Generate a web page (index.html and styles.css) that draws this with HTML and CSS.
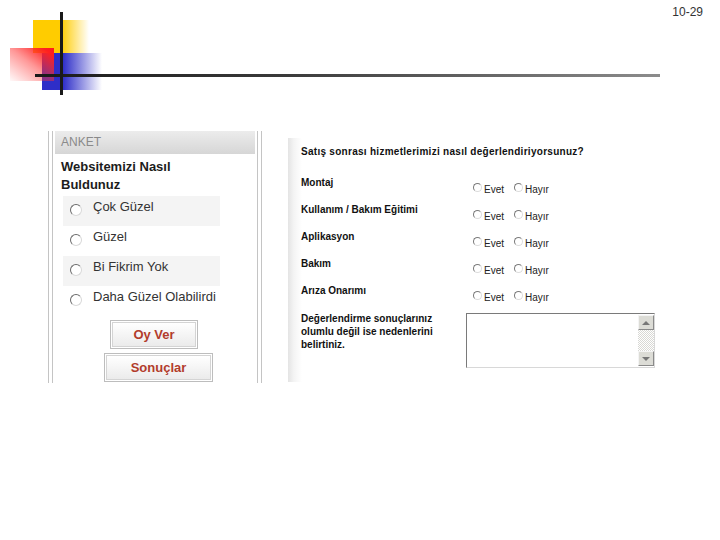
FILE: index.html
```html
<!DOCTYPE html>
<html lang="tr">
<head>
<meta charset="utf-8">
<title>Anket</title>
<link rel="stylesheet" href="styles.css">
</head>
<body>
<header class="top">
  <svg class="deco" width="720" height="100" viewBox="0 0 720 100" aria-hidden="true">
    <defs>
      <linearGradient id="gy" x1="0" y1="0" x2="1" y2="0">
        <stop offset="0" stop-color="#ffcc00"/>
        <stop offset="0.5" stop-color="#ffcc00"/>
        <stop offset="1" stop-color="#ffcc00" stop-opacity="0"/>
      </linearGradient>
      <linearGradient id="gb" x1="0" y1="0" x2="1" y2="0">
        <stop offset="0" stop-color="#2e2ec8"/>
        <stop offset="0.35" stop-color="#2e2ec8"/>
        <stop offset="1" stop-color="#2e2ec8" stop-opacity="0"/>
      </linearGradient>
      <linearGradient id="gr" x1="1" y1="0" x2="0" y2="1">
        <stop offset="0" stop-color="#ff1a1a"/>
        <stop offset="0.12" stop-color="#ff2020"/>
        <stop offset="0.5" stop-color="#ff3030" stop-opacity="0.5"/>
        <stop offset="1" stop-color="#ff4040" stop-opacity="0.03"/>
      </linearGradient>
      <linearGradient id="gl" x1="0" y1="0" x2="1" y2="0">
        <stop offset="0" stop-color="#1a1a1a"/>
        <stop offset="0.4" stop-color="#3a3a3a"/>
        <stop offset="1" stop-color="#8c8c8c"/>
      </linearGradient>
    </defs>
    <rect x="33" y="20" width="56" height="33" fill="url(#gy)"/>
    <rect x="42" y="53" width="60" height="37" fill="url(#gb)"/>
    <rect x="10" y="48" width="44" height="33" fill="url(#gr)"/>
    <rect x="35" y="74" width="625" height="3" fill="url(#gl)"/>
    <rect x="60" y="12" width="3" height="83" fill="#1a1a1a"/>
  </svg>
  <div class="pagenum">10-29</div>
</header>

<main class="content">
  <section class="poll">
    <div class="poll-inner">
      <div class="poll-head">ANKET</div>
      <div class="poll-title">Websitemizi Nasıl<br>Buldunuz</div>
      <div class="poll-options">
        <div class="opt shaded"><span class="radio big"></span><span class="opt-text">Çok Güzel</span></div>
        <div class="opt"><span class="radio big"></span><span class="opt-text">Güzel</span></div>
        <div class="opt shaded"><span class="radio big"></span><span class="opt-text">Bi Fikrim Yok</span></div>
        <div class="opt"><span class="radio big"></span><span class="opt-text">Daha Güzel Olabilirdi</span></div>
      </div>
      <div class="poll-buttons">
        <div class="btn btn-vote"><span class="btn-face">Oy Ver</span></div>
        <div class="btn btn-results"><span class="btn-face">Sonuçlar</span></div>
      </div>
    </div>
  </section>

  <section class="survey">
    <div class="question">Satış sonrası hizmetlerimizi nasıl değerlendiriyorsunuz?</div>
    <div class="srow">
      <div class="slabel">Montaj</div>
      <div class="choices"><span class="radio"></span><span class="ctext">Evet</span><span class="radio second"></span><span class="ctext">Hayır</span></div>
    </div>
    <div class="srow">
      <div class="slabel">Kullanım / Bakım Eğitimi</div>
      <div class="choices"><span class="radio"></span><span class="ctext">Evet</span><span class="radio second"></span><span class="ctext">Hayır</span></div>
    </div>
    <div class="srow">
      <div class="slabel">Aplikasyon</div>
      <div class="choices"><span class="radio"></span><span class="ctext">Evet</span><span class="radio second"></span><span class="ctext">Hayır</span></div>
    </div>
    <div class="srow">
      <div class="slabel">Bakım</div>
      <div class="choices"><span class="radio"></span><span class="ctext">Evet</span><span class="radio second"></span><span class="ctext">Hayır</span></div>
    </div>
    <div class="srow">
      <div class="slabel">Arıza Onarımı</div>
      <div class="choices"><span class="radio"></span><span class="ctext">Evet</span><span class="radio second"></span><span class="ctext">Hayır</span></div>
    </div>
    <div class="trow">
      <div class="tlabel">Değerlendirme sonuçlarınız<br>olumlu değil ise nedenlerini<br>belirtiniz.</div>
      <div class="tarea">
        <div class="tarea-body"></div>
        <div class="sbar">
          <div class="sbtn"><span class="arrow up"></span></div>
          <div class="strack"></div>
          <div class="sbtn"><span class="arrow down"></span></div>
        </div>
      </div>
    </div>
  </section>
</main>
</body>
</html>
```

FILE: styles.css
```css
html, body {
  margin: 0;
  padding: 0;
  background: #ffffff;
}
body {
  width: 720px;
  height: 540px;
  overflow: hidden;
  font-family: "Liberation Sans", Arial, sans-serif;
  color: #1a1a1a;
}

/* header decoration */
.top {
  position: relative;
  height: 100px;
}
.deco {
  display: block;
}
.pagenum {
  position: absolute;
  top: 4px;
  right: 17px;
  font-size: 12px;
  line-height: 16px;
  color: #333;
}

/* main layout */
.content {
  display: flex;
  align-items: flex-start;
  padding-top: 31px;
}

/* left poll */
.poll {
  margin-left: 48px;
  width: 206px;
  border-left: 1px solid #c4c4c4;
  border-right: 1px solid #c4c4c4;
  padding: 0 3px;
}
.poll-inner {
  border-left: 1px solid #c4c4c4;
  border-right: 1px solid #c4c4c4;
  padding-bottom: 1px;
}
.poll-head {
  margin-left: 2px;
  width: 194px;
  height: 23px;
  padding-left: 6px;
  font-size: 12px;
  line-height: 23px;
  color: #8a8a8a;
  background: linear-gradient(#ececec, #d6d6d6);
}
.poll-title {
  margin-top: 4px;
  padding-left: 8px;
  font-size: 13px;
  font-weight: bold;
  line-height: 18px;
  color: #1c1c1c;
}
.poll-options {
  margin-top: 2px;
  margin-left: 10px;
  width: 157px;
}
.opt {
  display: flex;
  align-items: flex-start;
  height: 30px;
  padding-left: 7px;
}
.opt.shaded {
  background: #f4f4f4;
}
.opt-text {
  margin-left: 11px;
  padding-top: 4px;
  font-size: 13px;
  line-height: 14px;
  color: #333;
}

.radio {
  display: inline-block;
  box-sizing: border-box;
  flex: none;
  width: 9px;
  height: 9px;
  border-radius: 50%;
  border: 1px solid;
  border-color: #7a7a7a #dcdcdc #dcdcdc #7a7a7a;
  background: #fff;
}
.radio.big {
  width: 12px;
  height: 12px;
  margin-top: 8px;
  border-width: 1.5px;
  border-color: #6a6a6a #d8d8d8 #d8d8d8 #6a6a6a;
}

.poll-buttons {
  display: flex;
  flex-direction: column;
  align-items: flex-start;
}
.btn {
  box-sizing: border-box;
  height: 29px;
  border: 1px solid #bdbdbd;
  padding: 1px;
  margin-top: 4px;
}
.btn-vote {
  margin-left: 57px;
  width: 88px;
}
.btn-results {
  margin-left: 51px;
  width: 109px;
}
.btn-face {
  display: block;
  box-sizing: border-box;
  height: 100%;
  border: 1px solid #d4d4d4;
  background: linear-gradient(#ffffff, #ebebeb);
  text-align: center;
  font-size: 13px;
  font-weight: bold;
  line-height: 23px;
  color: #b23c2c;
}

/* right survey */
.survey {
  margin-left: 26px;
  margin-top: 7px;
  width: 359px;
  padding: 8px 0 14px 13px;
  background: linear-gradient(to right, #e4e4e4 0, #f4f4f4 6px, #ffffff 14px);
  font-size: 10px;
  color: #111;
}
.question {
  font-weight: bold;
  line-height: 12px;
  letter-spacing: 0.28px;
  margin-bottom: 19px;
}
.srow {
  display: grid;
  grid-template-columns: 172px auto;
  height: 27px;
}
.slabel {
  font-weight: bold;
  line-height: 12px;
}
.choices {
  display: flex;
  align-items: flex-start;
  padding-top: 6px;
  line-height: 12px;
  color: #222;
}
.choices .radio {
  margin-top: 0;
}
.ctext {
  margin-left: 2px;
  margin-top: 1px;
}
.radio.second {
  margin-left: 10px;
}
.trow {
  display: grid;
  grid-template-columns: 165px 189px;
}
.tlabel {
  font-weight: bold;
  line-height: 13px;
}
.tarea {
  margin-top: 1px;
  box-sizing: border-box;
  height: 55px;
  display: flex;
  border: 1px solid;
  border-color: #7a7a7a #d8d8d8 #d8d8d8 #7a7a7a;
  background: #fff;
}
.tarea-body {
  flex: 1;
}
.sbar {
  width: 16px;
  display: flex;
  flex-direction: column;
  padding: 1px 0;
}
.sbtn {
  box-sizing: border-box;
  height: 15px;
  border: 1px solid;
  border-color: #f4f4f4 #8a8a8a #8a8a8a #f4f4f4;
  background: #dcdcd6;
  display: flex;
  align-items: center;
  justify-content: center;
}
.strack {
  flex: 1;
  background-color: #eeeeea;
  background-image: repeating-conic-gradient(#ffffff 0 25%, #d8d8d4 0 50%);
  background-size: 2px 2px;
}
.arrow {
  width: 0;
  height: 0;
  border-left: 4px solid transparent;
  border-right: 4px solid transparent;
}
.arrow.up {
  border-bottom: 4px solid #777;
}
.arrow.down {
  border-top: 4px solid #777;
}
```
